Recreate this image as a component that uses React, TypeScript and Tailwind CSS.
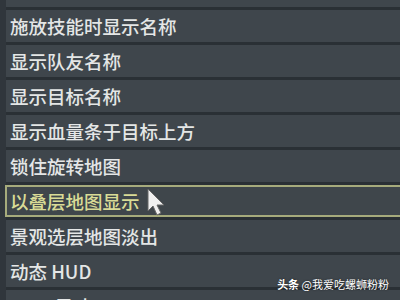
import React from 'react';

const rows = [
  '施放技能时显示名称',
  '显示队友名称',
  '显示目标名称',
  '显示血量条于目标上方',
  '锁住旋转地图',
  '以叠层地图显示',
  '景观选层地图淡出',
  '动态 HUD',
  'HUD 尺寸',
];

const Cursor = () => (
  <svg width="24" height="30" viewBox="0 0 24 30" className="absolute left-[139px] top-[1px]">
    <path d="M2 1 L2 23 L7 18 L11 27 L15 25 L11 17 L18 17 Z" fill="#f0f0f0" stroke="#666" strokeWidth="1" />
  </svg>
);

export default function App() {
  return (
    <div
      className="relative w-[400px] h-[300px] overflow-hidden bg-[#30363c]"
      style={{ fontFamily: '"Noto Sans CJK SC", "Noto Sans", sans-serif' }}
    >
      <div className="ml-[6px] flex flex-col">
        <div className="h-[7px] bg-[#3f464c]" />
        {rows.map((label, i) => {
          const active = i === 5;
          return (
            <div key={label} className="border-t-[3px] border-[#2a3035]">
              <div
                className={
                  active
                    ? 'relative h-[32px] flex items-center pl-[3px] bg-[#3f464b] border-2 border-[#a6ab7c] -ml-[1px] -mr-[4px]'
                    : 'h-[32px] flex items-center pl-[4px] bg-[#3f464c]'
                }
              >
                <span
                  className={
                    active
                      ? 'text-[18.5px] font-medium leading-none text-[#d9db96]'
                      : 'text-[18.5px] font-medium leading-none text-[#e4e6e6]'
                  }
                >
                  {label}
                </span>
                {active && <Cursor />}
              </div>
            </div>
          );
        })}
      </div>
      <div className="absolute right-[11px] bottom-[10px] text-[11px] leading-none text-white [text-shadow:0_0_2px_rgba(0,0,0,0.6)]">
        <span className="font-bold">头条</span> @我爱吃螺蛳粉粉
      </div>
    </div>
  );
}
